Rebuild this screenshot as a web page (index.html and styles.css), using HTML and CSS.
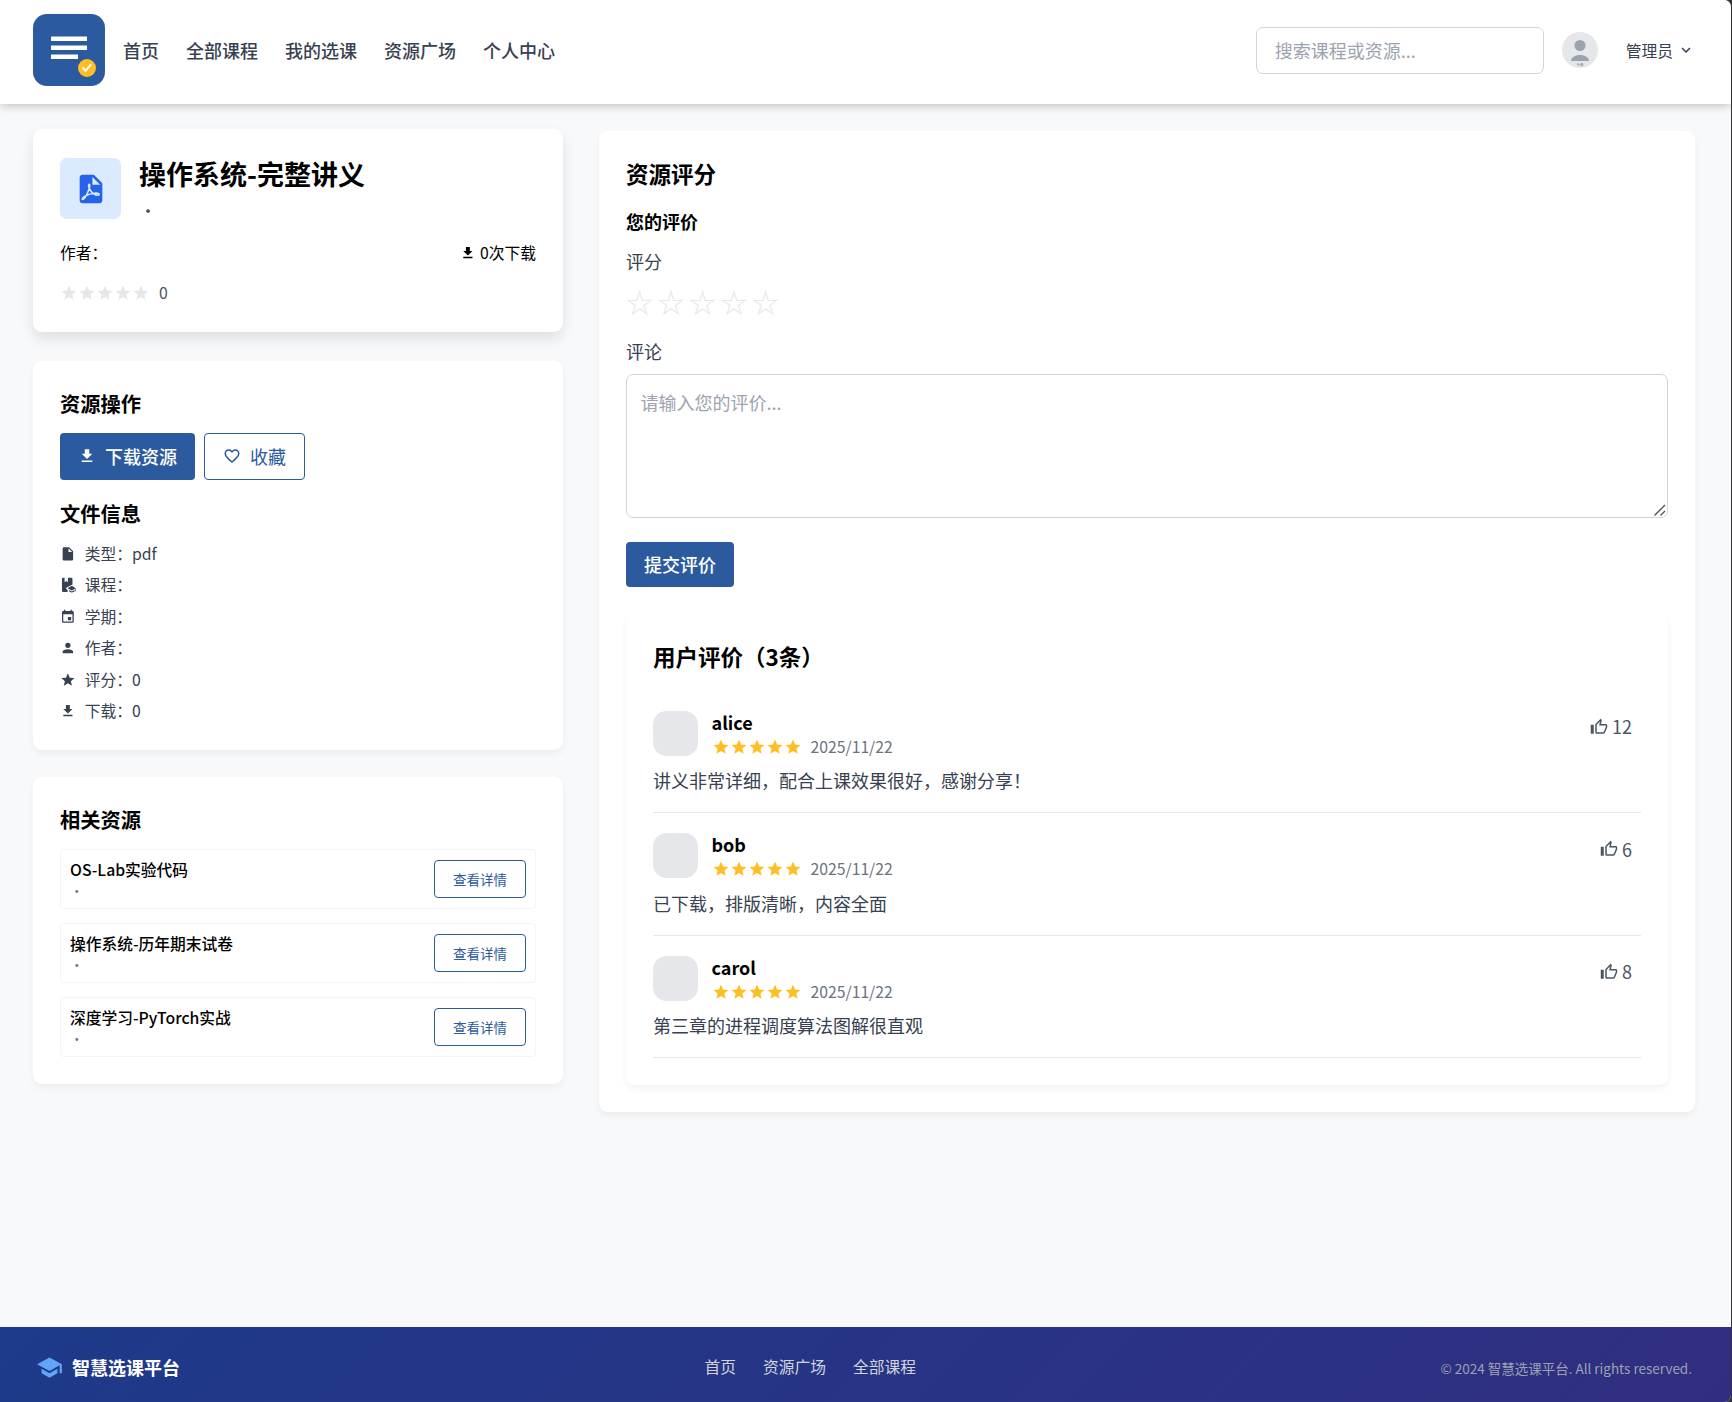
FILE: index.html
```html
<!DOCTYPE html>
<html lang="zh-CN">
<head>
    <meta charset="UTF-8">
    <meta name="viewport" content="width=device-width, initial-scale=1.0">
    <title>智慧选课平台</title>
    <link rel="stylesheet" href="styles.css">
</head>
<body>

    <!-- 图标 -->
    <svg class="symbols">
        <symbol id="download" viewBox="0 0 24 24"><path d="M5,20H19V18H5M19,9H15V3H9V9H5L12,16L19,9Z"/></symbol>
        <symbol id="star" viewBox="0 0 24 24"><path d="M12,17.27L18.18,21L16.54,13.97L22,9.24L14.81,8.62L12,2L9.19,8.62L2,9.24L7.45,13.97L5.82,21L12,17.27Z"/></symbol>
        <symbol id="heart" viewBox="0 0 24 24"><path d="M12.1,18.55L12,18.65L11.89,18.55C7.14,14.24 4,11.39 4,8.5C4,6.5 5.5,5 7.5,5C9.04,5 10.54,6 11.07,7.36H12.93C13.46,6 14.96,5 16.5,5C18.5,5 20,6.5 20,8.5C20,11.39 16.86,14.24 12.1,18.55M16.5,3C14.76,3 13.09,3.81 12,5.08C10.91,3.81 9.24,3 7.5,3C4.42,3 2,5.41 2,8.5C2,12.27 5.4,15.36 10.55,20.03L12,21.35L13.45,20.03C18.6,15.36 22,12.27 22,8.5C22,5.41 19.58,3 16.5,3Z"/></symbol>
        <symbol id="file" viewBox="0 0 24 24"><path d="M13,9V3.5L18.5,9M6,2C4.89,2 4,2.89 4,4V20A2,2 0 0,0 6,22H18A2,2 0 0,0 20,20V8L14,2H6Z"/></symbol>
        <symbol id="account" viewBox="0 0 24 24"><path d="M12,4A4,4 0 0,1 16,8A4,4 0 0,1 12,12A4,4 0 0,1 8,8A4,4 0 0,1 12,4M12,14C16.42,14 20,15.79 20,18V20H4V18C4,15.79 7.58,14 12,14Z"/></symbol>
        <symbol id="calendar" viewBox="0 0 24 24"><path d="M19,19H5V8H19M16,1V3H8V1H6V3H5C3.89,3 3,3.89 3,5V19A2,2 0 0,0 5,21H19A2,2 0 0,0 21,19V5C21,3.89 20.1,3 19,3H18V1M17,12H12V17H17V12Z"/></symbol>
        <symbol id="book" viewBox="0 0 24 24"><path d="M5,1A2,2 0 0,0 3,3V21A2,2 0 0,0 5,23H11.5V19.5L9.5,18.300V16.500L19,11.500V3A2,2 0 0,0 17,1H12V8L9.5,6L7,8V1H5M18,13.500L11.500,17L18,20.500L22.700,18V22H24V17L18,13.500M14,19.800V22L18,24L22,22V19.800L18,22L14,19.800Z"/></symbol>
        <symbol id="thumb" viewBox="0 0 24 24"><path d="M5,9V21H1V9H5M9,21A2,2 0 0,1 7,19V9C7,8.45 7.22,7.95 7.59,7.59L14.17,1L15.23,2.06C15.5,2.33 15.67,2.7 15.67,3.11L15.64,3.43L14.69,8H21C22.11,8 23,8.9 23,10V12C23,12.26 22.95,12.5 22.86,12.73L19.84,19.78C19.54,20.5 18.83,21 18,21H9M9,19H18.03L21,12V10H12.21L13.34,4.68L9,9.03V19Z"/></symbol>
        <symbol id="school" viewBox="0 0 24 24"><path d="M12,3L1,9L12,15L21,10.09V17H23V9M5,13.18V17.18L12,21L19,17.18V13.18L12,17L5,13.18Z"/></symbol>
        <symbol id="chevron" viewBox="0 0 24 24"><path d="M7.41,8.58L12,13.17L16.59,8.58L18,10L12,16L6,10L7.41,8.58Z"/></symbol>
        <symbol id="stars" viewBox="0 0 120 24">
            <use href="#star" x="0" width="24" height="24"/><use href="#star" x="24" width="24" height="24"/><use href="#star" x="48" width="24" height="24"/><use href="#star" x="72" width="24" height="24"/><use href="#star" x="96" width="24" height="24"/>
        </symbol>
    </svg>

    <div class="page">
        <header class="header">
            <svg class="logo" viewBox="0 0 72 72">
                <rect width="72" height="72" rx="14" fill="#2c5a9e"/>
                <path d="M18 22.500h36v4.500H18zM18 31.500h36v4.500H18zM18 40.500h27v4.500H18z" fill="#fff"/>
                <circle cx="54" cy="54" r="9" fill="#ffbf24"/>
                <path d="M49.500 53.500l3 3.300 5.500-6.500" fill="none" stroke="#fff" stroke-width="2"/>
            </svg>
            <nav class="nav">
                <a>首页</a>
                <a>全部课程</a>
                <a>我的选课</a>
                <a>资源广场</a>
                <a>个人中心</a>
            </nav>
            <input class="search" type="text" placeholder="搜索课程或资源...">
            <svg class="avatar" viewBox="0 0 36 36">
                <circle cx="18" cy="18" r="18" fill="#e5e7eb"/>
                <circle cx="18" cy="13.500" r="5.500" fill="#9ca3af"/>
                <path d="M9 29C9 25.500 13 23 18 23s9 2.500 9 6z" fill="#9ca3af"/>
                <text x="18" y="34" font-size="3.400" text-anchor="middle" fill="#6b7280">头像</text>
            </svg>
            <div class="user">管理员<svg class="icon"><use href="#chevron"/></svg></div>
        </header>

        <main class="main">
            <div class="left">
                <section class="card card-active">
                    <div class="resource">
                        <div class="file-type">
                            <svg viewBox="0 0 24 24">
                                <use href="#file" width="24" height="24"/>
                                <path class="pdf-mark" d="M10.700 8.700C9.800 8.700 10.400 12.400 13.200 14.900C15 16.500 17.700 16.800 17.800 15.700C17.800 14.400 12 14.700 8.300 16.800C5.700 18.300 5.500 19.500 6.200 19.400C8.300 19 12.400 8.700 10.700 8.700Z"/>
                            </svg>
                        </div>
                        <div>
                            <h1 class="title">操作系统-完整讲义</h1>
                            <p class="meta">•</p>
                        </div>
                    </div>
                    <div class="author">
                        <span>作者：</span>
                        <span class="count"><svg class="icon"><use href="#download"/></svg>0次下载</span>
                    </div>
                    <div class="rating"><svg class="stars empty"><use href="#stars"/></svg>0</div>
                </section>

                <section class="card">
                    <h2 class="card-title">资源操作</h2>
                    <div class="actions">
                        <button class="btn btn-primary"><svg class="icon"><use href="#download"/></svg>下载资源</button>
                        <button class="btn btn-outline"><svg class="icon"><use href="#heart"/></svg>收藏</button>
                    </div>
                    <h2 class="card-title">文件信息</h2>
                    <ul class="info">
                        <li><svg class="icon"><use href="#file"/></svg>类型：pdf</li>
                        <li><svg class="icon"><use href="#book"/></svg>课程：</li>
                        <li><svg class="icon"><use href="#calendar"/></svg>学期：</li>
                        <li><svg class="icon"><use href="#account"/></svg>作者：</li>
                        <li><svg class="icon"><use href="#star"/></svg>评分：0</li>
                        <li><svg class="icon"><use href="#download"/></svg>下载：0</li>
                    </ul>
                </section>

                <section class="card">
                    <h2 class="card-title">相关资源</h2>
                    <div class="related">
                        <div class="related-item">
                            <div><h3>OS-Lab实验代码</h3><p>•</p></div>
                            <button class="btn-small">查看详情</button>
                        </div>
                        <div class="related-item">
                            <div><h3>操作系统-历年期末试卷</h3><p>•</p></div>
                            <button class="btn-small">查看详情</button>
                        </div>
                        <div class="related-item">
                            <div><h3>深度学习-PyTorch实战</h3><p>•</p></div>
                            <button class="btn-small">查看详情</button>
                        </div>
                    </div>
                </section>
            </div>

            <section class="card right">
                <h2 class="section-title">资源评分</h2>
                <form class="form">
                    <h3>您的评价</h3>
                    <label>评分</label>
                    <div class="star-input"><span>☆</span><span>☆</span><span>☆</span><span>☆</span><span>☆</span></div>
                    <label>评论</label>
                    <div class="comment">
                        <textarea placeholder="请输入您的评价..."></textarea>
                        <svg class="grip" viewBox="0 0 14 14"><path d="M1.500 12.500l10.500-10.500M7.500 12.500l4.500-4.500"/></svg>
                    </div>
                    <button type="button" class="btn btn-primary">提交评价</button>
                </form>

                <div class="card reviews">
                    <h2 class="section-title">用户评价（3条）</h2>
                    <div class="review">
                        <div class="review-head">
                            <div class="face"></div>
                            <div>
                                <h4>alice</h4>
                                <div class="date"><svg class="stars"><use href="#stars"/></svg>2025/11/22</div>
                            </div>
                            <div class="like"><svg class="icon"><use href="#thumb"/></svg>12</div>
                        </div>
                        <p>讲义非常详细，配合上课效果很好，感谢分享！</p>
                    </div>
                    <div class="review">
                        <div class="review-head">
                            <div class="face"></div>
                            <div>
                                <h4>bob</h4>
                                <div class="date"><svg class="stars"><use href="#stars"/></svg>2025/11/22</div>
                            </div>
                            <div class="like"><svg class="icon"><use href="#thumb"/></svg>6</div>
                        </div>
                        <p>已下载，排版清晰，内容全面</p>
                    </div>
                    <div class="review">
                        <div class="review-head">
                            <div class="face"></div>
                            <div>
                                <h4>carol</h4>
                                <div class="date"><svg class="stars"><use href="#stars"/></svg>2025/11/22</div>
                            </div>
                            <div class="like"><svg class="icon"><use href="#thumb"/></svg>8</div>
                        </div>
                        <p>第三章的进程调度算法图解很直观</p>
                    </div>
                </div>
            </section>
        </main>

        <footer class="footer">
            <div class="brand"><svg class="icon"><use href="#school"/></svg>智慧选课平台</div>
            <nav class="footer-nav">
                <a>首页</a>
                <a>资源广场</a>
                <a>全部课程</a>
            </nav>
            <p class="copyright">© 2024 智慧选课平台. All rights reserved.</p>
        </footer>
    </div>

</body>
</html>
```

FILE: styles.css
```css
* {
    box-sizing: border-box;
    margin: 0;
    padding: 0;
}

html {
    background-color: #333;
}

body {
    font-family: "Noto Sans CJK SC", sans-serif;
    font-size: 18px;
    line-height: 27px;
    color: #000;
}

button, input, textarea {
    font: inherit;
}

.symbols {
    display: none;
}

.icon {
    width: 18px;
    height: 18px;
    fill: currentColor;
    flex-shrink: 0;
}

.page {
    display: flex;
    flex-direction: column;
    height: 1402px;
    margin-right: 1px;
    background-color: #f8f9fb;
    border-radius: 0 7px 7px 0;
    overflow: hidden;
}

/* 顶部导航 */
.header {
    display: flex;
    align-items: center;
    height: 104px;
    padding: 0 36px 4px 33px;
    background-color: #fff;
    box-shadow: 0 2px 9px rgba(0, 0, 0, 0.22);
    z-index: 1;
}

.logo {
    width: 72px;
    height: 72px;
    margin-right: 18px;
}

.nav {
    display: flex;
    gap: 27px;
    font-weight: 500;
    color: #374151;
}

.search {
    width: 288px;
    height: 47px;
    margin-left: auto;
    padding: 0 18px;
    border: 1px solid #d1d5db;
    border-radius: 7px;
    outline: none;
}

::placeholder {
    color: #9ca3af;
}

.avatar {
    width: 36px;
    height: 36px;
    margin: 0 28px 0 18px;
}

.user {
    display: flex;
    align-items: center;
    gap: 4px;
    font-size: 15.75px;
    color: #374151;
}

/* 主体 */
.main {
    display: grid;
    grid-template-columns: 530px 1096px;
    gap: 36px;
    align-items: start;
    padding: 27px 0 0 33px;
}

.left {
    display: flex;
    flex-direction: column;
    gap: 27px;
}

.card {
    padding: 27px;
    background-color: #fff;
    border-radius: 9px;
    box-shadow: 0 4px 7px rgba(0, 0, 0, 0.05);
}

.card-active {
    box-shadow: 0 7px 14px rgba(0, 0, 0, 0.1);
    transform: translateY(-2px);
}

.resource {
    display: flex;
    align-items: center;
    gap: 18px;
}

.file-type {
    width: 61px;
    height: 61px;
    margin-bottom: 2px;
    padding: 13.5px;
    background-color: #dbeafe;
    border-radius: 7px;
}

.file-type svg {
    display: block;
    width: 34px;
    height: 34px;
    fill: #2563eb;
}

.file-type .pdf-mark {
    fill: none;
    stroke: #dbeafe;
    stroke-width: 1.1;
}

.title {
    margin-bottom: 4.5px;
    font-size: 27px;
    line-height: 36px;
}

.meta {
    color: #4b5563;
}

.author {
    display: flex;
    justify-content: space-between;
    margin: 18px 0;
    font-size: 15.75px;
    line-height: 22.5px;
}

.count {
    display: flex;
    align-items: center;
    gap: 4.5px;
}

.count .icon {
    width: 15.75px;
    height: 15.75px;
}

.rating, .date {
    display: flex;
    align-items: center;
    gap: 9px;
    font-size: 15.75px;
    line-height: 22.5px;
    color: #4b5563;
}

.stars {
    width: 90px;
    height: 18px;
    fill: #ffbf24;
}

.stars.empty {
    margin-bottom: 1px;
    fill: #e5e7eb;
}

.card-title {
    margin-bottom: 13.5px;
    font-size: 20.25px;
    font-weight: 600;
    line-height: 31.5px;
}

.actions {
    display: flex;
    gap: 9px;
    height: 47px;
    margin-bottom: 18px;
}

.btn {
    display: flex;
    align-items: center;
    gap: 9px;
    padding: 9px 18px;
    border: none;
    border-radius: 4px;
}

.btn-primary {
    background-color: #2c5a9e;
    color: #fff;
    font-weight: 500;
}

.btn-outline {
    background-color: #fff;
    border: 1px solid #2c5a9e;
    color: #2c5a9e;
}

.info {
    display: flex;
    flex-direction: column;
    gap: 9px;
    list-style: none;
    font-size: 15.75px;
    line-height: 22.5px;
    color: #374151;
}

.info li {
    display: flex;
    align-items: center;
    gap: 9px;
}

.info .icon {
    width: 15.75px;
    height: 15.75px;
}

.related {
    display: flex;
    flex-direction: column;
    gap: 13.5px;
}

.related-item {
    display: flex;
    justify-content: space-between;
    align-items: center;
    padding: 9px;
    border: 1px solid #f3f4f6;
    border-radius: 4px;
}

.related-item h3 {
    font-size: 15.75px;
    font-weight: 500;
    line-height: 22.5px;
}

.related-item p {
    font-size: 13.5px;
    line-height: 18px;
    color: #6b7280;
}

.btn-small {
    padding: 9px 18px;
    border: 1px solid #2c5a9e;
    border-radius: 4px;
    background-color: #fff;
    font-size: 13.5px;
    line-height: 18px;
    color: #2c5a9e;
}

/* 评价 */
.section-title {
    margin-bottom: 18px;
    font-size: 22.5px;
    font-weight: 600;
    line-height: 31.5px;
}

.form {
    margin-bottom: 27px;
}

.form h3 {
    margin-bottom: 13.5px;
    font-size: 18px;
    font-weight: 600;
}

.form label {
    display: block;
    margin-bottom: 9px;
    color: #374151;
}

.star-input {
    display: flex;
    gap: 4.5px;
    margin-bottom: 18px;
    font-size: 27px;
    line-height: 36px;
    color: #e5e7eb;
}

.comment {
    position: relative;
    margin-bottom: 24.5px;
}

.form textarea {
    display: block;
    width: 100%;
    height: 143.5px;
    padding: 13.5px;
    border: 1px solid #d1d5db;
    border-radius: 7px;
    resize: none;
}

.grip {
    position: absolute;
    right: 1px;
    bottom: 1px;
    width: 14px;
    height: 14px;
    fill: none;
    stroke: #555;
    stroke-width: 1.4;
}

.review {
    padding: 18px 0;
    border-bottom: 1px solid #e5e7eb;
    color: #374151;
}

.review-head {
    display: flex;
    align-items: center;
    margin-bottom: 9px;
}

.face {
    width: 45px;
    height: 45px;
    margin-right: 13.5px;
    border-radius: 13.5px;
    background-color: #e5e7eb;
}

.review h4 {
    font-weight: 600;
    color: #000;
}

.date {
    color: #6b7280;
}

.like {
    display: flex;
    align-items: center;
    align-self: flex-start;
    gap: 4.5px;
    margin-left: auto;
    padding: 4.5px 9px;
    color: #4b5563;
}

/* 页脚 */
.footer {
    display: flex;
    align-items: center;
    justify-content: space-between;
    height: 75px;
    margin-top: auto;
    padding: 4px 39px 0 36px;
    background: linear-gradient(135deg, #1e3a8a, #312e81);
    color: #fff;
}

.brand {
    display: flex;
    align-items: center;
    gap: 9px;
    padding-top: 2px;
    font-weight: 700;
}

.brand .icon {
    width: 27px;
    height: 27px;
    fill: #60a5fa;
}

.footer-nav {
    display: flex;
    gap: 27px;
    font-size: 15.75px;
    color: #d1d5db;
}

.copyright {
    padding-top: 3px;
    font-size: 13.5px;
    color: #9ca3af;
}
```
